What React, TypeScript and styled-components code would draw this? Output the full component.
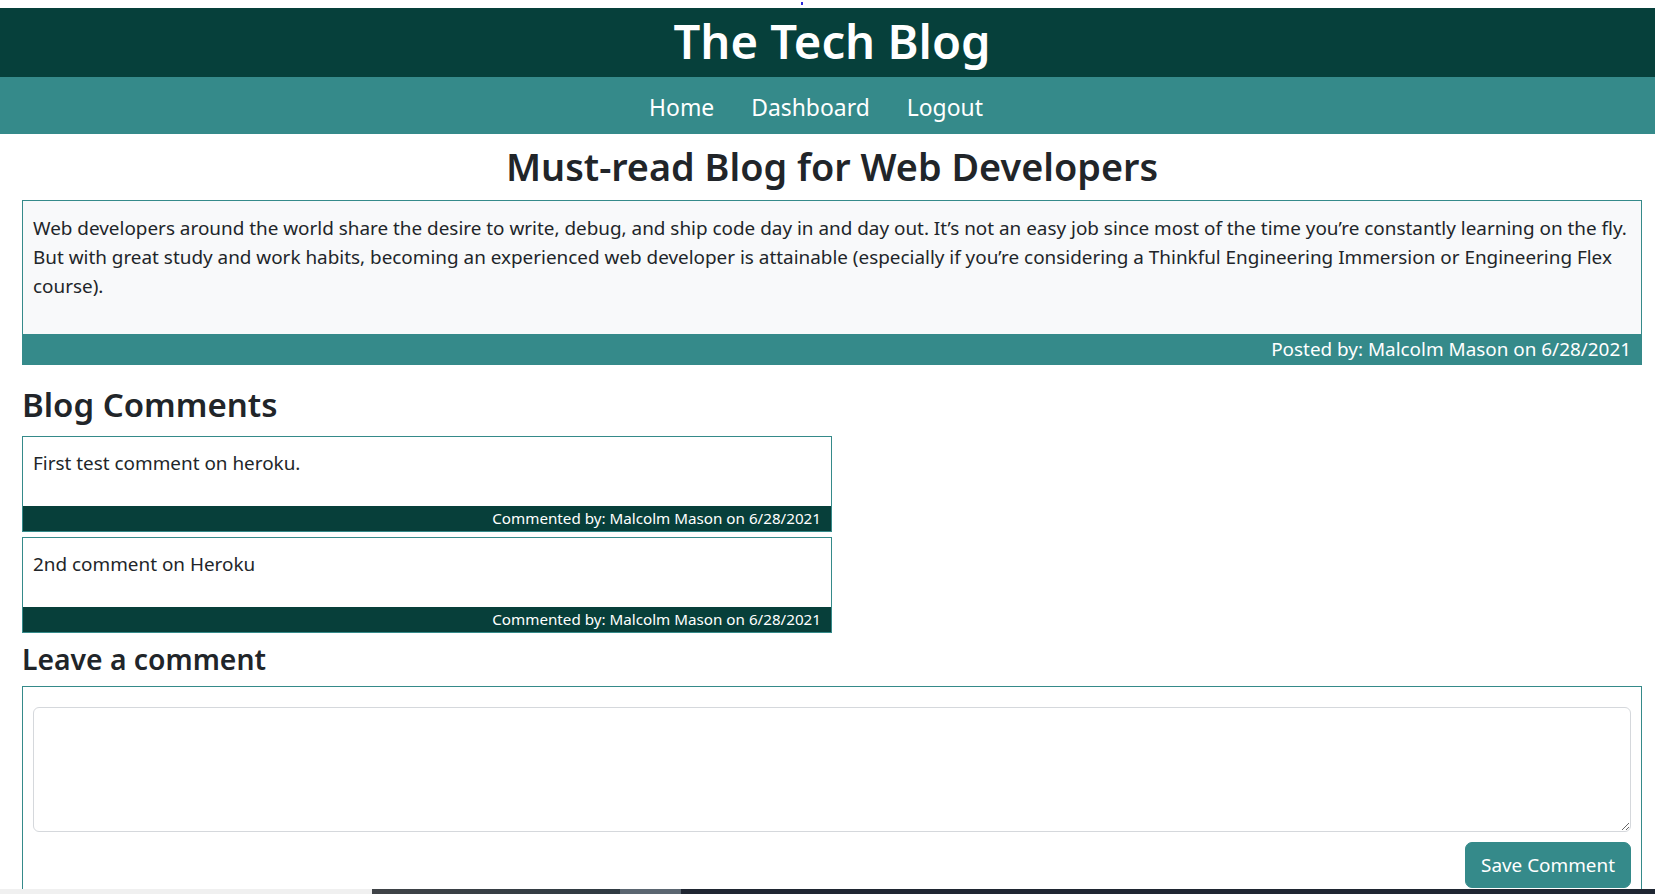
import React from "react";
import styled, { createGlobalStyle } from "styled-components";

const GlobalStyle = createGlobalStyle`
  * {
    box-sizing: border-box;
  }
  body {
    margin: 0;
    background: #ffffff;
    color: #212529;
    font-family: "Noto Sans", "Open Sans", "Liberation Sans", sans-serif;
    font-size: 18.9px;
    line-height: 28.8px;
  }
`;

const TopStrip = styled.div`
  height: 8px;
  display: flex;
  padding-left: 801px;
  padding-top: 2px;
`;

const Dot = styled.span`
  width: 2px;
  height: 3px;
  background: #2b2bd9;
`;

const Header = styled.header`
  background: #06403b;
  height: 69px;
  display: flex;
  align-items: center;
  justify-content: center;
  padding: 0 13px 2px 22px;
`;

const Title = styled.h1`
  margin: 0;
  color: #ffffff;
  font-size: 47.2px;
  font-weight: 600;
  line-height: 1.2;
`;

const Nav = styled.nav`
  background: #358a8a;
  height: 57px;
  display: flex;
  align-items: center;
  justify-content: center;
  gap: 37px;
  padding: 5px 23px 0 0;
`;

const NavLink = styled.a`
  color: #ffffff;
  font-size: 22.9px;
  text-decoration: none;
  cursor: pointer;
`;

const Main = styled.main`
  padding: 0 13px 0 22px;
`;

const PageTitle = styled.h2`
  margin: 10px 0 10px;
  text-align: center;
  font-size: 37.8px;
  font-weight: 600;
  line-height: 46px;
`;

const Card = styled.section<{ $width?: string }>`
  width: ${props => props.$width || "100%"};
  border: 1px solid #358a8a;
`;

const CardBody = styled.div<{ $bg?: string; $pad?: string }>`
  background: ${props => props.$bg || "#ffffff"};
  padding: ${props => props.$pad || "12px 10px 9px"};
`;

const CardText = styled.p`
  margin: 0 0 19px;
`;

const CardFooter = styled.div<{ $bg: string; $size: string; $height: string }>`
  background: ${props => props.$bg};
  color: #ffffff;
  height: ${props => props.$height};
  font-size: ${props => props.$size};
  line-height: ${props => props.$height};
  text-align: right;
  padding: 0 10px;
`;

const SectionTitle = styled.h3<{ $size: string; $margin: string }>`
  margin: ${props => props.$margin};
  font-size: ${props => props.$size};
  font-weight: 600;
  line-height: 1.2;
`;

const CommentList = styled.div`
  display: flex;
  flex-direction: column;
  gap: 5px;
`;

const FormCard = styled.form`
  border: 1px solid #358a8a;
  padding: 20px 10px 40px;
  display: flex;
  flex-direction: column;
  gap: 10px;
`;

const TextArea = styled.textarea`
  width: 100%;
  height: 125px;
  border: 1px solid #d5d8dc;
  border-radius: 6px;
  resize: vertical;
  font: inherit;
  padding: 6px 12px;
  outline: none;
`;

const ButtonRow = styled.div`
  display: flex;
  justify-content: flex-end;
`;

const SaveButton = styled.button`
  background: #358a8a;
  color: #ffffff;
  border: 1px solid #358a8a;
  border-radius: 7px;
  font-family: inherit;
  font-size: 18.9px;
  line-height: 28.8px;
  padding: 8px 15px;
  cursor: pointer;
`;

const Taskbar = styled.div`
  position: fixed;
  left: 0;
  right: 0;
  bottom: 0;
  height: 5px;
  display: flex;
`;

const TaskSegment = styled.div<{ $bg: string; $width?: string }>`
  background: ${props => props.$bg};
  width: ${props => props.$width || "auto"};
  flex: ${props => (props.$width ? "none" : "1")};
`;

const comments = [
  { text: "First test comment on heroku.", by: "Malcolm Mason", date: "6/28/2021" },
  { text: "2nd comment on Heroku", by: "Malcolm Mason", date: "6/28/2021" },
];

const App: React.FC = () => {
  return (
    <>
      <GlobalStyle />
      <TopStrip>
        <Dot />
      </TopStrip>
      <Header>
        <Title>The Tech Blog</Title>
      </Header>
      <Nav>
        <NavLink>Home</NavLink>
        <NavLink>Dashboard</NavLink>
        <NavLink>Logout</NavLink>
      </Nav>
      <Main>
        <PageTitle>Must-read Blog for Web Developers</PageTitle>
        <Card>
          <CardBody $bg="#f8f9fa" $pad="13px 10px 15px">
            <CardText>
              Web developers around the world share the desire to write, debug, and ship code day in and
              day out. It’s not an easy job since most of the time you’re constantly learning on the fly.
              But with great study and work habits, becoming an experienced web developer is attainable
              (especially if you’re considering a Thinkful Engineering Immersion or Engineering Flex
              course).
            </CardText>
          </CardBody>
          <CardFooter $bg="#358a8a" $size="18.9px" $height="30px">
            Posted by: Malcolm Mason on 6/28/2021
          </CardFooter>
        </Card>

        <SectionTitle $size="33px" $margin="20px 0 11px">
          Blog Comments
        </SectionTitle>
        <CommentList>
          {comments.map((c, i) => (
            <Card key={i} $width="810px">
              <CardBody>
                <CardText>{c.text}</CardText>
              </CardBody>
              <CardFooter $bg="#073f3a" $size="15.2px" $height="25px">
                Commented by: {c.by} on {c.date}
              </CardFooter>
            </Card>
          ))}
        </CommentList>

        <SectionTitle $size="28.3px" $margin="10px 0 9px">
          Leave a comment
        </SectionTitle>
        <FormCard onSubmit={e => e.preventDefault()}>
          <TextArea />
          <ButtonRow>
            <SaveButton type="submit">Save Comment</SaveButton>
          </ButtonRow>
        </FormCard>
      </Main>
      <Taskbar>
        <TaskSegment $bg="#f0f0f0" $width="372px" />
        <TaskSegment $bg="linear-gradient(90deg, #3f4347, #2f3a42)" $width="248px" />
        <TaskSegment $bg="#5b6671" $width="61px" />
        <TaskSegment $bg="#1f2632" />
      </Taskbar>
    </>
  );
};

export default App;
